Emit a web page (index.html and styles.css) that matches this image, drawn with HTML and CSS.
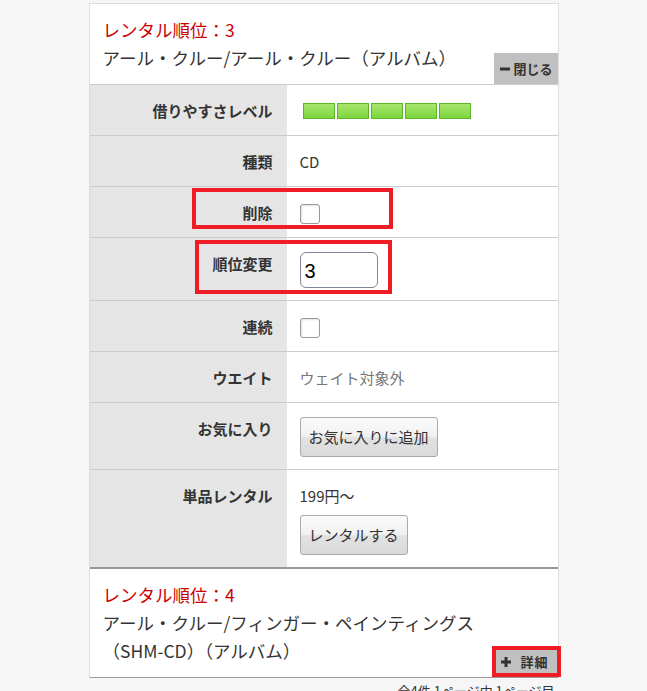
FILE: index.html
```html
<!DOCTYPE html>
<html lang="ja">
<head>
	<meta charset="UTF-8">
	<title>レンタルリスト</title>
	<link rel="stylesheet" href="styles.css">
</head>
<body>
	<div class="list">
		<div class="item">
			<div class="item-head">
				<div class="item-text">
					<p class="rank">レンタル順位：3</p>
					<p class="title">アール・クルー/アール・クルー（アルバム）</p>
				</div>
				<button class="toggle close"><svg class="ico" viewBox="0 0 10 10"><rect x="0" y="3.5" width="10" height="3"/></svg>閉じる</button>
			</div>
			<div class="spec">
				<div class="row">
					<div class="label">借りやすさレベル</div>
					<div class="value"><span class="level"><i></i><i></i><i></i><i></i><i></i></span></div>
				</div>
				<div class="row">
					<div class="label">種類</div>
					<div class="value">CD</div>
				</div>
				<div class="row">
					<div class="label">削除</div>
					<div class="value"><input type="checkbox" class="check"></div>
					<span class="mark mark-del"></span>
				</div>
				<div class="row">
					<div class="label">順位変更</div>
					<div class="value"><input type="text" class="order" value="3"></div>
					<span class="mark mark-order"></span>
				</div>
				<div class="row">
					<div class="label">連続</div>
					<div class="value"><input type="checkbox" class="check"></div>
				</div>
				<div class="row">
					<div class="label">ウエイト</div>
					<div class="value note">ウェイト対象外</div>
				</div>
				<div class="row">
					<div class="label">お気に入り</div>
					<div class="value"><button class="btn">お気に入りに追加</button></div>
				</div>
				<div class="row">
					<div class="label">単品レンタル</div>
					<div class="value">
						<div>199円～</div>
						<button class="btn btn-rent">レンタルする</button>
					</div>
				</div>
			</div>
		</div>
		<div class="item item-closed">
			<div class="item-head">
				<div class="item-text">
					<p class="rank">レンタル順位：4</p>
					<p class="title">アール・クルー/フィンガー・ペインティングス（SHM-CD）（アルバム）</p>
				</div>
				<button class="toggle open"><svg class="ico" viewBox="0 0 10 10"><rect x="0" y="3.5" width="10" height="3"/><rect x="3.5" y="0" width="3" height="10"/></svg>詳細</button>
			</div>
		</div>
	</div>
	<p class="pager">全4件 1ページ中 1ページ目</p>
</body>
</html>
```

FILE: styles.css
```css
body, div, p {
	margin: 0;
	padding: 0;
}
body {
	padding-top: 3px;
	font: 15px/24px "Noto Sans CJK JP", "Noto Sans", sans-serif;
	color: #333;
	background: #f6f6f6;
}
.list {
	width: 468px;
	margin: 0 auto;
	background: #fff;
	border: 1px solid #ddd;
	border-bottom: 0;
}
.item-head {
	display: flex;
	align-items: flex-end;
	padding: 12px 0 0 13px;
	border-bottom: 1px solid #ccc;
}
.item-text {
	flex: 1;
	padding-bottom: 12px;
	font-size: 17.5px;
	line-height: 28px;
}
.rank {
	color: #c00;
}
.toggle {
	display: flex;
	align-items: center;
	gap: 3px;
	height: 31px;
	padding: 0 5px 0 6px;
	border: 0;
	background: #c0c0c0;
	color: #333;
	font: bold 13px/31px "Noto Sans CJK JP", sans-serif;
	cursor: pointer;
}
.toggle .ico {
	width: 10px;
	height: 10px;
	fill: #333;
}
.toggle.open {
	height: 25px;
	margin-bottom: 3px;
	gap: 9px;
	padding: 0 9px 0 6px;
	letter-spacing: 1px;
	outline: 4px solid #ee1c25;
	outline-offset: -1px;
}
.item-closed .item-head {
	border-bottom: 1px solid #999;
}
.spec {
	border-bottom: 2px solid #999;
}
.row {
	position: relative;
	display: grid;
	grid-template-columns: 197px 1fr;
	border-bottom: 1px solid #ccc;
}
.row:last-child {
	border-bottom: 0;
}
.label {
	padding: 16px 14px 14px 0;
	background: #e5e5e5;
	font-weight: bold;
	line-height: 20px;
	text-align: right;
}
.value {
	padding: 14px 14px 12px 13px;
	line-height: 24px;
}
.note {
	color: #777;
}
.level {
	display: flex;
	gap: 2px;
	height: 24px;
	align-items: center;
	padding-left: 3px;
}
.level i {
	width: 30px;
	height: 14px;
	border: 1px solid #5db52c;
	background: linear-gradient(#a8e66e, #7dd63c);
}
.check {
	-webkit-appearance: none;
	appearance: none;
	display: block;
	width: 20px;
	height: 20px;
	margin: 3px 0 1px 0;
	border: 1px solid #999;
	border-radius: 3px;
	background: #fff;
	box-shadow: inset 1px 1px 2px rgba(0, 0, 0, 0.12);
}
.order {
	display: block;
	box-sizing: border-box;
	width: 78px;
	height: 36px;
	margin: 0;
	padding: 2px 4px 0;
	border: 1px solid #7d8797;
	border-radius: 6px;
	font: 20px "Liberation Sans", Arial, sans-serif;
	color: #000;
}
.btn {
	display: block;
	height: 40px;
	margin: 0;
	padding: 0 8px;
	border: 1px solid #aaa;
	border-radius: 3px;
	background: linear-gradient(#fbfbfb 0%, #f1f1f1 48%, #e2e2e2 52%, #dadada 100%);
	color: #333;
	font: 15px/38px "Noto Sans CJK JP", sans-serif;
	cursor: pointer;
}
.btn-rent {
	margin-top: 7px;
}
.mark {
	position: absolute;
	border: 4px solid #ee1c25;
	pointer-events: none;
}
.mark-del {
	left: 102px;
	top: 1px;
	width: 193px;
	height: 33px;
}
.mark-order {
	left: 105px;
	top: 2px;
	width: 189px;
	height: 46px;
}
.pager {
	width: 462px;
	margin: 0 auto;
	padding-top: 3px;
	font-size: 13px;
	line-height: 20px;
	text-align: right;
}
```
